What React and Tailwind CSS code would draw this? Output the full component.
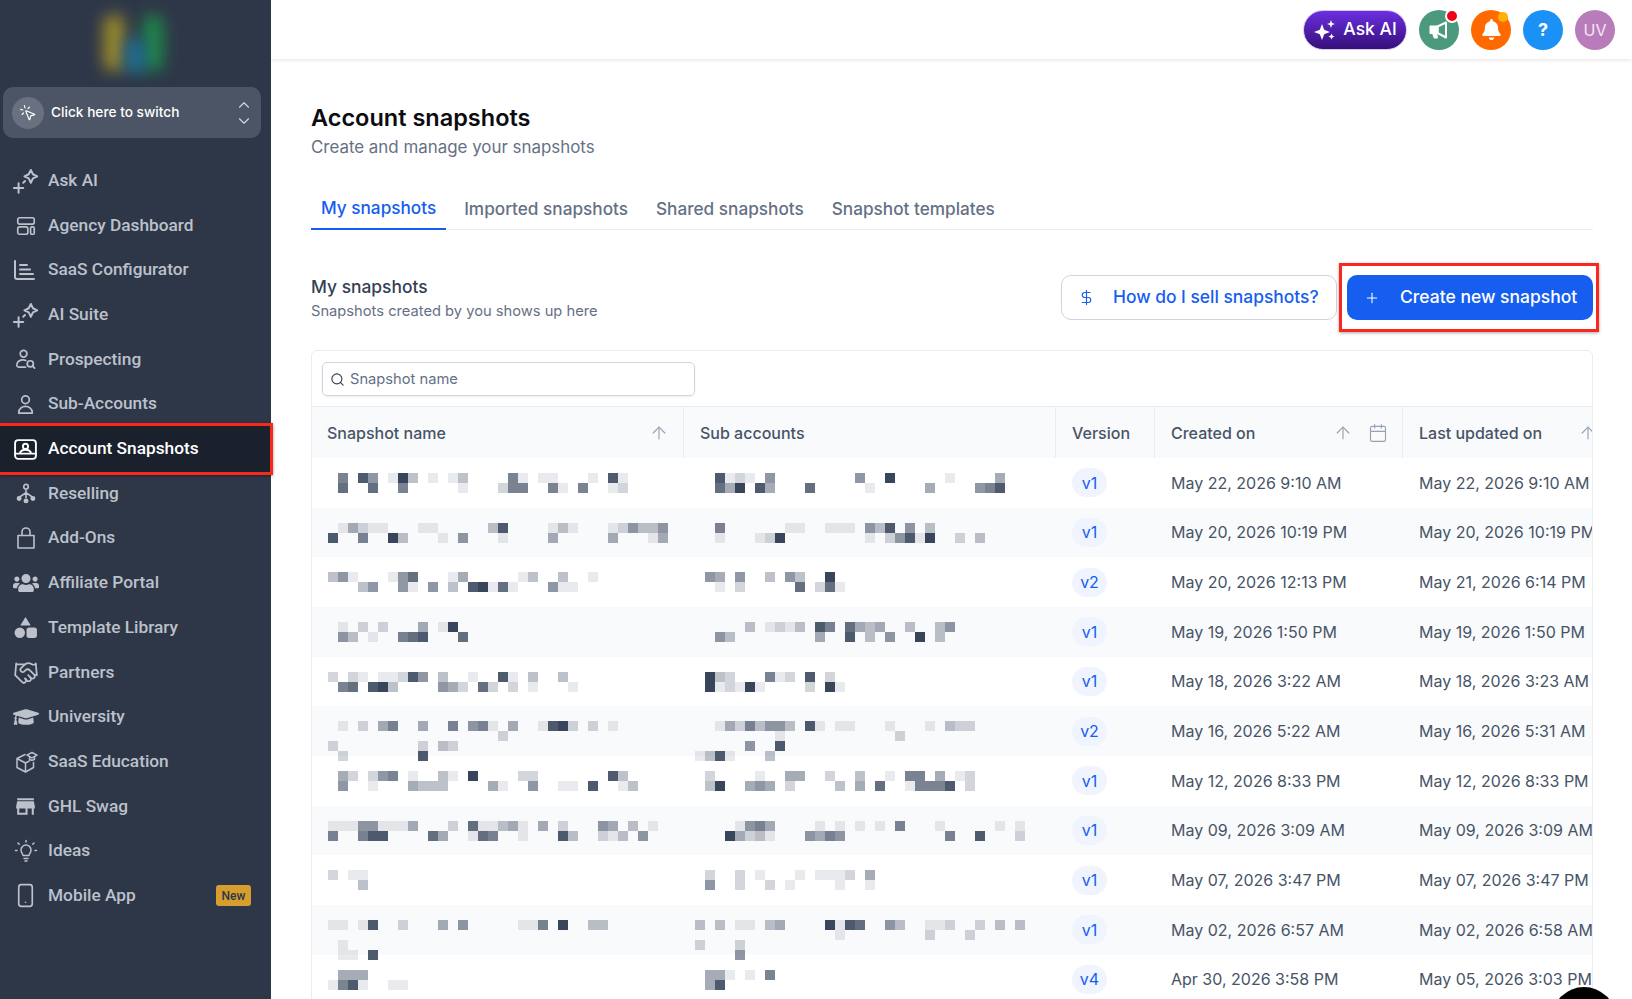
import { ArrowUp, Calendar, DollarSign, Handshake, MousePointerClick, Plus, Search, ChevronUp, ChevronDown } from 'lucide-react';
import { FaBell, FaGraduationCap, FaUsers } from 'react-icons/fa';
import { MdStore } from 'react-icons/md';

const Stroke = ({ size = 24, sw = 1.8, children }) => (
  <svg width={size} height={size} viewBox="0 0 24 24" fill="none" stroke="currentColor" strokeWidth={sw} strokeLinecap="round" strokeLinejoin="round">
    {children}
  </svg>
);

const SparkPlus = () => (
  <span className="-ml-[1px]">
    <Stroke size={28} sw={1.7}>
      <path d="M17 2.500l1.800 3.700 3.700 1.800-3.700 1.800L17 13.500l-1.800-3.700L11.500 8l3.700-1.800z" />
      <path d="M6.500 14v8M2.500 18h8M10.500 13.500l1.500-1.500" />
    </Stroke>
  </span>
);

const navItems = [
  { label: 'Ask AI', icon: <SparkPlus /> },
  {
    label: 'Agency Dashboard',
    icon: (
      <Stroke size={22}>
        <rect x="3" y="3" width="18" height="7" rx="2" />
        <rect x="3" y="13" width="11" height="8" rx="2" />
        <rect x="17" y="13" width="4" height="8" rx="1.500" />
      </Stroke>
    ),
  },
  {
    label: 'SaaS Configurator',
    icon: (
      <span className="-ml-[3px]">
        <Stroke size={24} sw={2}>
          <path d="M3 3v16a2 2 0 0 0 2 2h17" />
          <path d="M8 7h7M8 11.500h10M8 16h13" />
        </Stroke>
      </span>
    ),
  },
  { label: 'AI Suite', icon: <SparkPlus /> },
  {
    label: 'Prospecting',
    icon: (
      <Stroke size={23}>
        <circle cx="10" cy="6" r="3.500" />
        <path d="M12 20H5.500c-2 0-3-1.500-2.500-3 .8-2.800 3.500-4.500 6.500-4.500 1 0 2 .2 2.800.5" />
        <circle cx="17" cy="16.500" r="3.200" />
        <path d="M19.500 19l2 2" />
      </Stroke>
    ),
  },
  {
    label: 'Sub-Accounts',
    icon: (
      <Stroke size={23}>
        <circle cx="12" cy="7" r="4" />
        <path d="M5 21v-1a7 6 0 0 1 14 0v1z" />
      </Stroke>
    ),
  },
  {
    label: 'Account Snapshots',
    active: true,
    icon: (
      <Stroke size={25}>
        <rect x="2" y="3" width="20" height="18" rx="3" />
        <circle cx="12" cy="9" r="2.500" />
        <path d="M6.500 16c.5-2.500 2.800-3.800 5.500-3.800s5 1.300 5.500 3.800M2 16h20" />
      </Stroke>
    ),
  },
  {
    label: 'Reselling',
    icon: (
      <Stroke size={22}>
        <circle cx="12" cy="4" r="2.500" />
        <path d="M12 8v8M12 10.500L5.500 15M12 10.500l6.500 4.500" />
        <circle cx="4.500" cy="17" r="1.800" fill="currentColor" />
        <circle cx="12" cy="19.500" r="1.800" fill="currentColor" />
        <circle cx="19.500" cy="17" r="1.800" fill="currentColor" />
      </Stroke>
    ),
  },
  {
    label: 'Add-Ons',
    icon: (
      <Stroke size={24} sw={1.6}>
        <path d="M4 9.500h16V22H4zM8 9.500V6a4 4 0 0 1 8 0v3.500" />
      </Stroke>
    ),
  },
  { label: 'Affiliate Portal', icon: <FaUsers size={26} /> },
  {
    label: 'Template Library',
    icon: (
      <svg width="25" height="25" viewBox="0 0 24 24" fill="currentColor">
        <path d="M12 2l5 8H7z" />
        <circle cx="6.500" cy="17" r="5" />
        <rect x="13" y="12" width="10" height="10" rx="2.500" />
      </svg>
    ),
  },
  { label: 'Partners', icon: <Handshake size={26} strokeWidth={1.6} /> },
  { label: 'University', icon: <FaGraduationCap size={26} /> },
  {
    label: 'SaaS Education',
    icon: (
      <Stroke size={24} sw={1.5}>
        <path d="M11 4.500L3 8.500v9l8.500 4.500 8-4.500v-5M3 8.500l8.500 4.500V22M11.500 13l4-2.200" />
        <path d="M13 5.200l5-2.700 5 2.700-5 2.700z" />
        <path d="M15.500 7v2.300c1.500 1 3.500 1 5 0V7" />
      </Stroke>
    ),
  },
  { label: 'GHL Swag', icon: <MdStore size={25} /> },
  {
    label: 'Ideas',
    icon: (
      <Stroke size={24} sw={1.5}>
        <path d="M9 16.500c0-1.500-2-2.500-2-5.500a5 5 0 0 1 10 0c0 3-2 4-2 5.500z" />
        <path d="M10 19.500h4M11 22h2M12 1.500v1.500M4 4l1.200 1.200M20 4l-1.200 1.200M1.500 11.500h1.500M21 11.500h1.500" />
      </Stroke>
    ),
  },
  {
    label: 'Mobile App',
    badge: 'New',
    icon: (
      <Stroke size={25} sw={1.6}>
        <rect x="5.500" y="1.500" width="13" height="21" rx="2.500" />
        <path d="M12 18.500h.01" />
      </Stroke>
    ),
  },
];

// redacted names, one digit per 10px cell: 0 is empty, 9 is darkest
const rows = [
  {
    version: 'v1', created: 'May 22, 2026 9:10 AM', updated: 'May 22, 2026 9:10 AM',
    name: ['060850193010130000610110001081', '070070060000010002660061060012'],
    sub: ['0081210500000000500900000100004', '0074908400070000010000040000568'],
  },
  {
    version: 'v1', created: 'May 20, 2026 10:19 PM', updated: 'May 20, 2026 10:19 PM',
    name: ['0142110001100000380000131000125335', '8006009300010500010000400000400014'],
    sub: ['006000000110011105380503', '00100012900000000102581900203'],
  },
  {
    version: 'v2', created: 'May 20, 2026 12:13 PM', updated: 'May 21, 2026 6:14 PM',
    name: ['351000157000140000013003001', '0003500510503089171000511'],
    sub: ['05405003053009', '001020000070271'],
  },
  {
    version: 'v1', created: 'May 19, 2026 1:50 PM', updated: 'May 19, 2026 1:50 PM',
    name: ['0102020004019', '05301006780007'],
    sub: ['00000301213086074340030035', '0053000000004008030500903'],
  },
  {
    version: 'v1', created: 'May 18, 2026 3:22 AM', updated: 'May 18, 2026 3:23 AM',
    name: ['202101128503001008103003', '0670893000054207202010001'],
    sub: ['09320006120802', '091219100002091'],
  },
  {
    version: 'v2', created: 'May 16, 2026 5:22 AM', updated: 'May 16, 2026 5:31 AM',
    name: ['01020460040060561040018920201', '000000000000000002', '2000000002032', '0200000008'],
    sub: ['0014263553081011000100010322', '000000001000000000002', '000005008', '13810003'],
  },
  {
    version: 'v1', created: 'May 12, 2026 8:33 PM', updated: 'May 12, 2026 8:33 PM',
    name: ['042025601003109000022000000083', '0500100043330000410050011080013'],
    sub: ['0200001004400200300106604012', '0390045402000030407001666802'],
  },
  {
    version: 'v1', created: 'May 09, 2026 3:09 AM', updated: 'May 09, 2026 3:09 AM',
    name: ['111551114000207113410402000540301', '60068800007400176001000830021305'],
    sub: ['000015640000101010106000100000101', '000942310005465000000000060080002'],
  },
  {
    version: 'v1', created: 'May 07, 2026 3:47 PM', updated: 'May 07, 2026 3:47 PM',
    name: ['2011', '0003'],
    sub: ['020020100010111204', '050020020100001001'],
  },
  {
    version: 'v1', created: 'May 02, 2026 6:57 AM', updated: 'May 02, 2026 6:58 AM',
    name: ['1101800200040500000116090033', '', '01', '01108'],
    sub: ['303011034000091870053001120020303', '0000000000000010000000020002', '20002', '00005'],
  },
  {
    version: 'v4', created: 'Apr 30, 2026 3:58 PM', updated: 'May 05, 2026 3:03 PM',
    name: ['0444', '16810011'],
    sub: ['04410106', '048'],
  },
];

function Mosaic({ lines }) {
  return (
    <svg width="340" height="20" className="overflow-visible">
      {lines.map((line, y) =>
        line.split('').map((c, x) =>
          c === '0' ? null : (
            <rect key={`${y}-${x}`} x={x * 10} y={y * 10} width="10" height="10" fill="#2c3a52" fillOpacity={Number(c) * 0.105} />
          )
        )
      )}
    </svg>
  );
}

function Sidebar() {
  return (
    <aside className="relative z-20 w-[271px] shrink-0 h-full bg-[#2e3748] font-['Roboto',sans-serif]">
      <div className="relative h-[87px] overflow-hidden">
        <div className="absolute left-[104px] top-[15px] w-[20px] h-[56px] rounded-lg bg-[#a08e2a] blur-[8px]"></div>
        <div className="absolute left-[143px] top-[15px] w-[20px] h-[56px] rounded-lg bg-[#1f8a4a] blur-[8px]"></div>
        <div className="absolute left-[125px] top-[38px] w-[20px] h-[36px] rounded-lg bg-[#1f7096] blur-[8px]"></div>
      </div>
      <div className="mx-[3px] w-[258px] h-[51px] rounded-[10px] bg-[#4b5565] flex items-center pl-[9px] pr-[8px] text-white">
        <span className="w-[32px] h-[32px] rounded-full bg-[#697180] flex items-center justify-center">
          <MousePointerClick size={18} strokeWidth={1.5} />
        </span>
        <span className="ml-[7px] text-[13.7px] font-medium flex-1 font-['Inter',sans-serif]">Click here to switch</span>
        <span className="flex flex-col text-[#d5d8de]">
          <ChevronUp size={18} strokeWidth={1.5} className="-mb-[2px]" />
          <ChevronDown size={18} strokeWidth={1.5} />
        </span>
      </div>
      <nav className="mt-[20.6px]">
        {navItems.map((item) => (
          <div key={item.label} className={`relative h-[44.7px] flex items-center pr-[20px] ${item.active ? 'text-white' : 'text-[#bcc1cb]'}`}>
            {item.active && (
              <div className="absolute left-0 -right-[2px] -top-[4px] -bottom-[4px] bg-[#1a202c] border-y-[3px] border-r-[3px] border-[#f9281c] shadow-[0_1px_3px_rgba(0,0,0,0.4)]"></div>
            )}
            <span className="relative w-[48px] pl-[3px] flex justify-center">{item.icon}</span>
            <span className="relative text-[17.3px] font-medium flex-1">{item.label}</span>
            {item.badge && (
              <span className="w-[35px] h-[21px] rounded-[3px] bg-[#d69e2e] text-[#2d3748] text-[12px] font-medium flex items-center justify-center">{item.badge}</span>
            )}
          </div>
        ))}
      </nav>
    </aside>
  );
}

function TopBar() {
  return (
    <header className="h-[59px] shrink-0 bg-white shadow-[0_1px_4px_rgba(16,24,40,0.12)] flex items-center justify-end pr-[17px] gap-[12px] relative z-10">
      <button className="h-[40px] w-[104px] rounded-full bg-gradient-to-b from-[#6b2fe2] to-[#36107a] border border-[#d9c8f2] text-white text-[17.5px] font-medium flex items-center justify-center gap-[6px]">
        <svg width="24" height="24" viewBox="0 0 24 24" fill="currentColor">
          <path d="M9 6l2.200 5.800L17 14l-5.800 2.200L9 22l-2.200-5.800L1 14l5.800-2.200z" />
          <path d="M18 2l1.100 2.900L22 6l-2.900 1.100L18 10l-1.100-2.900L14 6l2.900-1.100zM18.500 15.500l.9 2.100 2.100.9-2.100.9-.9 2.100-.9-2.100-2.100-.9 2.100-.9z" />
        </svg>
        Ask AI
      </button>
      <span className="relative w-[40px] h-[40px] rounded-full bg-[#4b9a7e] text-white flex items-center justify-center">
        <svg width="24" height="24" viewBox="0 0 24 24" fill="none" stroke="currentColor" strokeWidth="2" strokeLinejoin="round" strokeLinecap="round">
          <path d="M3.500 8.500h7v6.500h-7z" fill="currentColor" />
          <path d="M10.500 8.500L19 4.500v15l-8.500-4.500z" />
          <path d="M6 15l1.500 4.500h2.500L9 15" fill="currentColor" />
        </svg>
        <span className="absolute -top-[1px] right-0 w-[14px] h-[14px] rounded-full bg-[#f00017] border-2 border-white"></span>
      </span>
      <span className="relative w-[40px] h-[40px] rounded-full bg-[#ff6a00] text-white flex items-center justify-center">
        <FaBell size={21} />
        <span className="absolute top-[2px] right-[3px] w-[10px] h-[10px] rounded-full bg-[#ffb300]"></span>
      </span>
      <span className="w-[40px] h-[40px] rounded-full bg-[#1c91f5] text-white text-[18px] font-bold flex items-center justify-center">?</span>
      <span className="w-[40px] h-[40px] rounded-full bg-[#b97cbb] text-[#f3e6f3] text-[16px] flex items-center justify-center">UV</span>
    </header>
  );
}

const tabs = ['My snapshots', 'Imported snapshots', 'Shared snapshots', 'Snapshot templates'];

export default function App() {
  return (
    <div className="relative flex h-screen overflow-hidden bg-white font-['Inter',sans-serif]">
      <Sidebar />
      <main className="flex-1 min-w-0 flex flex-col">
        <TopBar />
        <div className="pl-[40px] pr-[39px]">
          <h1 className="mt-[43px] text-[23.5px] leading-[32px] font-semibold text-[#0c0c10]">Account snapshots</h1>
          <p className="mt-[1px] text-[16.9px] leading-[24px] text-[#667085]">Create and manage your snapshots</p>

          <div className="mt-[26px] h-[45px] flex gap-[8px] border-b border-[#eaecf0]">
            {tabs.map((t, i) => (
              <div key={t} className={`px-[10px] h-[45px] pt-[3px] flex items-center text-[17.2px] font-medium ${i === 0 ? 'text-[#155eef] border-b-2 border-[#155eef]' : 'text-[#667085]'}`}>
                {t}
              </div>
            ))}
          </div>

          <div className="mt-[45px] flex items-start">
            <div className="flex-1">
              <div className="text-[17.4px] leading-[24px] font-medium text-[#344054]">My snapshots</div>
              <div className="mt-[2px] text-[14.7px] leading-[20px] text-[#667085]">Snapshots created by you shows up here</div>
            </div>
            <button className="w-[276px] h-[45px] rounded-[10px] border border-[#d0d5dd] bg-white text-[#155eef] text-[17.4px] font-medium flex items-center pl-[16px]">
              <DollarSign size={17} strokeWidth={1.6} />
              <span className="ml-[18px]">How do I sell snapshots?</span>
            </button>
            <button className="ml-[10px] w-[246px] h-[45px] rounded-[10px] bg-[#155eef] text-white text-[17.5px] font-medium flex items-center pl-[17px] relative">
              <Plus size={16} strokeWidth={1.6} />
              <span className="ml-[20px]">Create new snapshot</span>
              <span className="absolute -left-[8px] -right-[6px] -top-[12px] -bottom-[12px] border-[3px] border-[#f9281c] shadow-[0_1px_3px_rgba(0,0,0,0.35)]"></span>
            </button>
          </div>

          <div className="mt-[29px] border border-[#eaecf0] rounded-t-[6px] overflow-hidden">
            <div className="h-[55px] pl-[10px] pt-[11px]">
              <div className="w-[373px] h-[34px] rounded-[5px] border border-[#d0d5dd] shadow-[0_1px_2px_rgba(16,24,40,0.08)] flex items-center pl-[7px] text-[#667085] text-[14.7px]">
                <Search size={15} strokeWidth={1.8} className="text-[#344054]" />
                <span className="ml-[5px]">Snapshot name</span>
              </div>
            </div>
            <div className="w-[1400px] grid grid-cols-[372px_372px_99px_248px_309px] h-[52px] bg-[#f9fafb] border-t border-[#eaecf0] text-[16px] font-medium text-[#475467]">
              <div className="flex items-center justify-between pl-[15px] pr-[14px] border-r border-[#eaecf0]">
                Snapshot name
                <ArrowUp size={20} strokeWidth={1.4} className="text-[#98a2b3]" />
              </div>
              <div className="flex items-center pl-[16px] border-r border-[#eaecf0]">Sub accounts</div>
              <div className="flex items-center pl-[16px] border-r border-[#eaecf0]">Version</div>
              <div className="flex items-center pl-[16px] pr-[14px] border-r border-[#eaecf0]">
                <span className="flex-1">Created on</span>
                <ArrowUp size={20} strokeWidth={1.4} className="text-[#98a2b3]" />
                <Calendar size={20} strokeWidth={1.4} className="ml-[15px] text-[#98a2b3]" />
              </div>
              <div className="flex items-center pl-[16px]">
                Last updated on
                <ArrowUp size={20} strokeWidth={1.4} className="ml-[36px] text-[#98a2b3]" />
              </div>
            </div>
            {rows.map((row, i) => (
              <div key={row.created} className={`w-[1400px] grid grid-cols-[372px_372px_99px_248px_309px] h-[49.67px] text-[16px] text-[#475467] ${i % 2 === 1 ? 'bg-[#f9fafb]' : ''}`}>
                <div className="pl-[16px] pt-[15px]"><Mosaic lines={row.name} /></div>
                <div className="pl-[11px] pt-[15px]"><Mosaic lines={row.sub} /></div>
                <div className="flex items-center pl-[16px]">
                  <span className="w-[35px] h-[29px] rounded-full bg-[#eff4ff] text-[#155eef] text-[16px] flex items-center justify-center">{row.version}</span>
                </div>
                <div className="flex items-center pl-[16px]">{row.created}</div>
                <div className="flex items-center pl-[16px] whitespace-nowrap">{row.updated}</div>
              </div>
            ))}
          </div>
        </div>
      </main>
      <div className="absolute z-20 left-[1552px] top-[987px] w-[64px] h-[64px] rounded-full bg-black"></div>
    </div>
  );
}
